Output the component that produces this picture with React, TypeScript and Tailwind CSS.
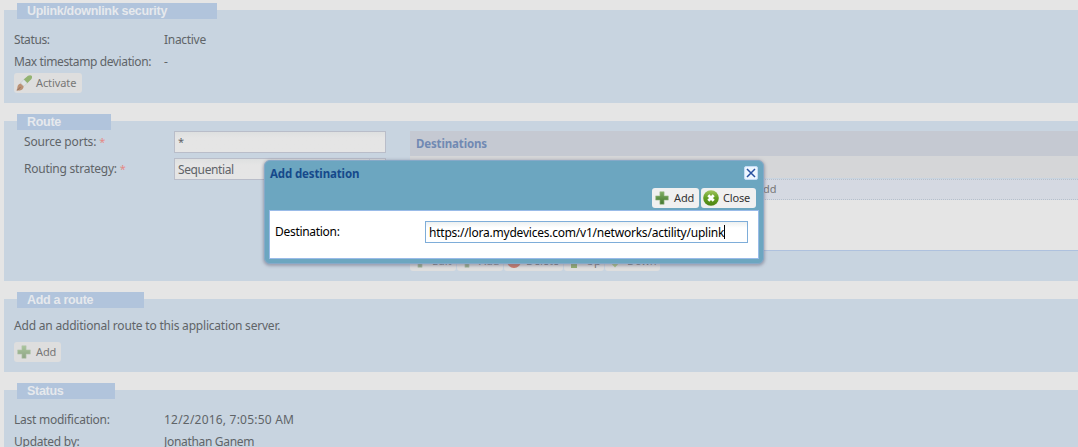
import type { ReactNode } from "react";

function PlusIcon({ faded = false }: { faded?: boolean }) {
  return (
    <svg width="14" height="14" viewBox="0 0 14 14" className="shrink-0">
      <defs>
        <linearGradient id={faded ? "plusFaded" : "plusFull"} x1="0" y1="0" x2="0" y2="1">
          <stop offset="0" stopColor={faded ? "#a9c59c" : "#7fae62"} />
          <stop offset="1" stopColor={faded ? "#8fa585" : "#43752f"} />
        </linearGradient>
      </defs>
      <path
        d="M4.9 .8h4.2v4.1h4.2v4.2H9.1v4.2H4.9V9.1H.7V4.9h4.2z"
        fill={`url(#${faded ? "plusFaded" : "plusFull"})`}
        stroke={faded ? "#b4c4ad" : "#9cba8c"}
        strokeWidth=".6"
      />
    </svg>
  );
}

function BrushIcon() {
  return (
    <svg width="16" height="16" viewBox="0 0 16 16" className="shrink-0">
      <path d="M7.6 4.6 12 .8Q14.4-.4 15.6 .8T15.3 4.2L11.2 8.2z" fill="#93b371" />
      <path d="M4.6 8 7.8 4.6 11.2 8 8 11.2z" fill="#dfe5e6" stroke="#bcc5c6" strokeWidth=".5" />
      <path d="M.3 15.4Q1.4 14 1.4 12.2 1.8 8.9 4.6 8.4L7.7 11.4Q7.2 14.8 3.8 15.4 2 15.8 .3 15.4z" fill="#bb9175" />
      <path d="M1.3 15Q3.6 13.9 4.4 12" stroke="#92715f" fill="none" strokeWidth="1" />
    </svg>
  );
}

function CloseBallIcon() {
  return (
    <svg width="16" height="16" viewBox="0 0 16 16" className="shrink-0">
      <defs>
        <linearGradient id="ball" x1="0" y1="0" x2="0" y2="1">
          <stop offset="0" stopColor="#a3c660" />
          <stop offset=".5" stopColor="#639e22" />
          <stop offset="1" stopColor="#4b8312" />
        </linearGradient>
      </defs>
      <circle cx="8" cy="8" r="7.8" fill="url(#ball)" />
      <path d="m5.3 5.3 5.4 5.4m0-5.4-5.4 5.4" stroke="#fff" strokeWidth="2.8" />
    </svg>
  );
}

function DeleteIcon() {
  return (
    <svg width="16" height="16" viewBox="0 0 16 16" className="shrink-0">
      <circle cx="8" cy="8" r="7" fill="#cc7967" />
      <path d="M4 7h8v2H4z" fill="#eee" />
    </svg>
  );
}

function ArrowIcon({ down = false }: { down?: boolean }) {
  return (
    <svg width="16" height="16" viewBox="0 0 16 16" className="shrink-0">
      {down ? (
        <path d="M5 2h6v5h4l-7 7.5L1 7h4z" fill="#a9c583" />
      ) : (
        <path d="M5 15h6V8h4L8 1 1 8h4z" fill="#91ae6e" />
      )}
    </svg>
  );
}

function Section({ title, legend, className, children }: { title: string; legend: string; className: string; children: ReactNode }) {
  return (
    <section className={`ml-1 shrink-0 bg-[#c8d4e0] ${className}`}>
      <h2 className={`-mt-[7px] ml-[13px] h-4 bg-[#b1c4dc] pl-[10px] font-['Liberation_Sans',Arial,sans-serif] text-[12.5px] leading-4 font-bold tracking-[-0.3px] text-[#e6e9ed] ${legend}`}>
        {title}
      </h2>
      {children}
    </section>
  );
}

function Row({ label, value, labelClass = "", valueClass = "" }: { label: string; value: string; labelClass?: string; valueClass?: string }) {
  return (
    <div className="flex h-[22px] items-center pl-[10px]">
      <span className="w-[150px]"><span className={labelClass}>{label}</span></span>
      <span className={valueClass}>{value}</span>
    </div>
  );
}

function FadedButton({ icon, label, className }: { icon: ReactNode; label: string; className: string }) {
  return (
    <button className={`flex h-5 items-center rounded-[3px] bg-[#dedede] text-[11px] tracking-[-0.1px] text-[#777] ${className}`}>
      {icon}
      <span>{label}</span>
    </button>
  );
}

export default function App() {
  return (
    <div className="relative flex h-[447px] w-[1078px] flex-col overflow-hidden bg-[#e5e5e5] pt-[10px] font-['Noto_Sans','Open_Sans',sans-serif] text-[12px] whitespace-nowrap text-[#606468]">
      <Section title="Uplink/downlink security" legend="w-[200px]" className="h-[93px]">
        <div className="mt-[10px]">
          <Row label="Status:" value="Inactive" labelClass="tracking-[-0.4px]" valueClass="tracking-[-0.3px]" />
          <Row label="Max timestamp deviation:" value="-" labelClass="tracking-[-0.38px]" />
        </div>
        <FadedButton icon={<BrushIcon />} label="Activate" className="ml-[10px] w-[68px] gap-[4px] pl-[2px]" />
      </Section>

      <Section title="Route" legend="w-[94px]" className="mt-[18px] h-40">
        <div className="flex pl-5">
          <div className="w-[386px]">
            <div className="flex pt-px">
              <span className="w-[150px] pt-[2px] leading-[18px] tracking-[-0.18px]">Source ports: <span className="text-[11px] text-[#e58a86]">*</span></span>
              <div className="h-[22px] w-[212px] border border-[#b9bdc9] bg-linear-to-b from-[#dee0e0] to-[#e5e5e5] to-30% pl-[3px] text-[11px] leading-[20px]">*</div>
            </div>
            <div className="mt-[5px] flex">
              <span className="w-[150px] pt-[2px] leading-[18px] tracking-[-0.24px]">Routing strategy: <span className="text-[11px] text-[#e58a86]">*</span></span>
              <div className="flex h-[22px] w-[212px] border border-[#b9bdc9] bg-linear-to-b from-[#dee0e0] to-[#e5e5e5] to-30% pl-[3px] leading-[22px]">
                <span className="grow tracking-[-0.38px]">Sequential</span>
                <span className="w-4 border-l border-[#c5cad2]" />
              </div>
            </div>
          </div>
          <div className="mt-px grow">
            <div className="h-[25px] bg-[#c5c9d2] pl-[6px] text-[11.5px] leading-[26px] font-bold tracking-[-0.15px] text-[#7189b3]">Destinations</div>
            <div className="h-[22px] bg-[#d5d6d8]" />
            <div className="mt-px h-[21px] border-y border-dotted border-[#b6c0cc] bg-[#d5d9e2] pl-[346px] text-[11px] leading-[18px] text-[#777]">Add</div>
            <div className="h-[51px] border-b border-[#aec1de] bg-[#e5e5e5]" />
            <div className="flex gap-px">
              <FadedButton icon={<PlusIcon faded />} label="Edit" className="w-[46px] gap-[5px] pl-[3px]" />
              <FadedButton icon={<PlusIcon faded />} label="Add" className="w-[46px] gap-[5px] pl-[3px]" />
              <FadedButton icon={<DeleteIcon />} label="Delete" className="w-[59px] gap-[4px] pl-[2px]" />
              <FadedButton icon={<ArrowIcon />} label="Up" className="w-[40px] gap-[4px] pl-[2px]" />
              <FadedButton icon={<ArrowIcon down />} label="Down" className="w-[55px] gap-[4px] pl-[2px]" />
            </div>
          </div>
        </div>
      </Section>

      <Section title="Add a route" legend="w-[127px]" className="mt-[18px] h-[73px]">
        <div className="mt-[9px] pl-[10px] leading-[18px] tracking-[-0.2px]">Add an additional route to this application server.</div>
        <FadedButton icon={<PlusIcon faded />} label="Add" className="mt-[7px] ml-[10px] w-[47px] gap-[5px] pl-[3px]" />
      </Section>

      <Section title="Status" legend="w-[98px]" className="mt-[18px] h-[80px]">
        <div className="mt-[10px]">
          <Row label="Last modification:" value="12/2/2016, 7:05:50 AM" labelClass="tracking-[-0.25px]" valueClass="tracking-[0.21px]" />
          <Row label="Updated by:" value="Jonathan Ganem" labelClass="tracking-[-0.25px]" valueClass="tracking-[-0.32px]" />
        </div>
      </Section>

      <div role="dialog" className="absolute top-[160px] left-[264px] flex h-[104px] w-[500px] flex-col rounded-[6px] border border-[#86a9c8] bg-[#6ca6c0] px-1 pb-1 shadow-[0px_1px_3px_1px_rgba(110,110,130,0.5)]">
        <div className="flex h-[26px] items-center justify-between">
          <h3 className="pl-px text-[11.5px] font-bold tracking-[-0.13px] text-[#15498b]">Add destination</h3>
          <button className="mr-px -mt-[3px] flex size-[14px] items-center justify-center rounded-[2px] border border-[#c5dcf5] bg-[#eef6ff]">
            <svg width="10" height="10" viewBox="0 0 10 10"><path d="m1 1 8 8m0-8L1 9" stroke="#2850a0" strokeWidth="1.5" /></svg>
          </button>
        </div>
        <div className="flex h-[23px] justify-end gap-[2px] pt-px pr-[3px] text-[11px] tracking-[-0.15px] text-[#333]">
          <button className="flex h-5 w-[47px] items-center gap-[5px] rounded-[3px] bg-[#f0f0f0] pl-[3px]"><PlusIcon /><span>Add</span></button>
          <button className="flex h-5 w-[55px] items-center gap-[4px] rounded-[3px] bg-[#f0f0f0] pl-[2px]"><CloseBallIcon /><span>Close</span></button>
        </div>
        <div className="flex h-[49px] border border-[#99bbe8] bg-white pt-[10px] pl-[5px] text-black">
          <span className="w-[150px] leading-[22px] tracking-[-0.3px]">Destination:</span>
          <div className="flex h-[22px] w-[323px] items-center border border-[#7eadd9] bg-linear-to-b from-[#edf0f0] to-white to-30% pl-[3px]">
            <span className="pt-[2px] tracking-[-0.22px]">https://lora.mydevices.com/v1/networks/actility/uplink</span>
            <span className="h-[14px] w-px bg-black" />
          </div>
        </div>
      </div>
    </div>
  );
}
